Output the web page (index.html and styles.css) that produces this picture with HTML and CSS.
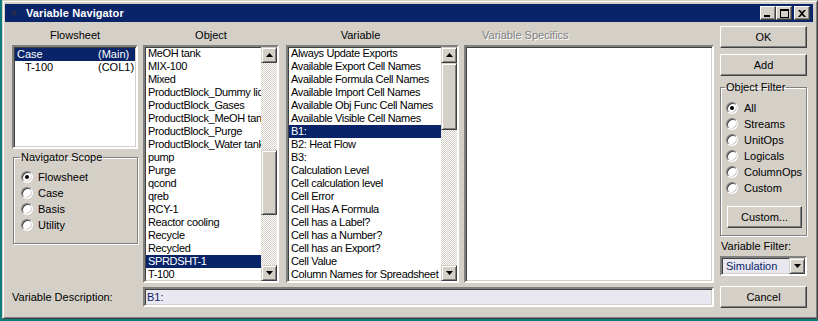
FILE: index.html
```html
<!DOCTYPE html>
<html>
<head>
<meta charset="utf-8">
<title>Variable Navigator</title>
<link rel="stylesheet" href="styles.css">
</head>
<body>
<div class="window">
  <div class="titlebar">
    <svg class="ticon" width="6" height="6" viewBox="0 0 6 6"><path d="M0 1 L1 0 L3 2 L5 0 L6 1 L4 3 L6 5 L5 6 L3 4 L1 6 L0 5 L2 3 Z" fill="#2c2c3c"/></svg>
    <span class="title">Variable Navigator</span>
    <div class="tbtns">
      <span class="tbtn"><svg width="8" height="7" viewBox="0 0 8 7"><rect x="0" y="5" width="6" height="2" fill="#000"/></svg></span>
      <span class="tbtn"><svg width="9" height="9" viewBox="0 0 9 9"><rect x="0.5" y="0.5" width="8" height="8" fill="none" stroke="#000"/><rect x="0" y="0" width="9" height="2" fill="#000"/></svg></span>
      <span class="tbtn close"><svg width="8" height="7" viewBox="0 0 8 7"><path d="M0 0 L2 0 L4 2 L6 0 L8 0 L5 3.5 L8 7 L6 7 L4 5 L2 7 L0 7 L3 3.5 Z" fill="#000"/></svg></span>
    </div>
  </div>
  <div class="content">
    <div class="main">
      <div class="cols">
        <div class="col c1">
          <div class="hdr">Flowsheet</div>
          <div class="list fs">
            <div class="row sel"><span class="n">Case</span><span class="t">(Main)</span></div>
            <div class="row"><span class="n ind">T-100</span><span class="t">(COL1)</span></div>
          </div>
          <fieldset class="group scope">
            <legend>Navigator Scope</legend>
            <label class="radio"><span class="rb on"></span>Flowsheet</label>
            <label class="radio"><span class="rb"></span>Case</label>
            <label class="radio"><span class="rb"></span>Basis</label>
            <label class="radio"><span class="rb"></span>Utility</label>
          </fieldset>
        </div>
        <div class="col c2">
          <div class="hdr">Object</div>
          <div class="list tall">
            <div class="items">
              <div class="row">MeOH tank</div>
              <div class="row">MIX-100</div>
              <div class="row">Mixed</div>
              <div class="row">ProductBlock_Dummy liq</div>
              <div class="row">ProductBlock_Gases</div>
              <div class="row">ProductBlock_MeOH tank</div>
              <div class="row">ProductBlock_Purge</div>
              <div class="row">ProductBlock_Water tank</div>
              <div class="row">pump</div>
              <div class="row">Purge</div>
              <div class="row">qcond</div>
              <div class="row">qreb</div>
              <div class="row">RCY-1</div>
              <div class="row">Reactor cooling</div>
              <div class="row">Recycle</div>
              <div class="row">Recycled</div>
              <div class="row sel">SPRDSHT-1</div>
              <div class="row">T-100</div>
            </div>
            <div class="sbar">
              <span class="sbtn"><svg width="7" height="4" viewBox="0 0 7 4"><path d="M3.5 0 L7 4 L0 4 Z" fill="#000"/></svg></span>
              <span class="track obj-top"></span>
              <span class="thumb obj-thumb"></span>
              <span class="track fill"></span>
              <span class="sbtn"><svg width="7" height="4" viewBox="0 0 7 4"><path d="M0 0 L7 0 L3.5 4 Z" fill="#000"/></svg></span>
            </div>
          </div>
        </div>
        <div class="col c3">
          <div class="hdr hdr-var">Variable</div>
          <div class="list tall">
            <div class="items">
              <div class="row">Always Update Exports</div>
              <div class="row">Available Export Cell Names</div>
              <div class="row">Available Formula Cell Names</div>
              <div class="row">Available Import Cell Names</div>
              <div class="row">Available Obj Func Cell Names</div>
              <div class="row">Available Visible Cell Names</div>
              <div class="row sel focus">B1:</div>
              <div class="row">B2: Heat Flow</div>
              <div class="row">B3:</div>
              <div class="row">Calculation Level</div>
              <div class="row">Cell calculation level</div>
              <div class="row">Cell Error</div>
              <div class="row">Cell Has A Formula</div>
              <div class="row">Cell has a Label?</div>
              <div class="row">Cell has a Number?</div>
              <div class="row">Cell has an Export?</div>
              <div class="row">Cell Value</div>
              <div class="row">Column Names for Spreadsheet</div>
            </div>
            <div class="sbar">
              <span class="sbtn"><svg width="7" height="4" viewBox="0 0 7 4"><path d="M3.5 0 L7 4 L0 4 Z" fill="#000"/></svg></span>
              <span class="thumb var-thumb"></span>
              <span class="track fill"></span>
              <span class="sbtn"><svg width="7" height="4" viewBox="0 0 7 4"><path d="M0 0 L7 0 L3.5 4 Z" fill="#000"/></svg></span>
            </div>
          </div>
        </div>
        <div class="col c4">
          <div class="hdr hdr-dis">Variable Specifics</div>
          <div class="list tall blank"></div>
        </div>
      </div>
      <div class="desc">
        <span class="desc-label">Variable Description:</span>
        <div class="desc-box">B1:</div>
      </div>
    </div>
    <div class="side">
      <div class="btn">OK</div>
      <div class="btn add">Add</div>
      <fieldset class="group filter">
        <legend>Object Filter</legend>
        <label class="radio"><span class="rb on"></span>All</label>
        <label class="radio"><span class="rb"></span>Streams</label>
        <label class="radio"><span class="rb"></span>UnitOps</label>
        <label class="radio"><span class="rb"></span>Logicals</label>
        <label class="radio"><span class="rb"></span>ColumnOps</label>
        <label class="radio"><span class="rb"></span>Custom</label>
        <div class="btn custom">Custom...</div>
      </fieldset>
      <div class="vf-label">Variable Filter:</div>
      <div class="combo">
        <span class="combo-text">Simulation</span>
        <span class="cbtn"><svg width="7" height="4" viewBox="0 0 7 4"><path d="M0 0 L7 0 L3.5 4 Z" fill="#000"/></svg></span>
      </div>
      <div class="btn cancel">Cancel</div>
    </div>
  </div>
</div>
</body>
</html>
```

FILE: styles.css
```css
* { box-sizing: border-box; }
html, body { margin: 0; padding: 0; }
body {
  background: #0f7d7d;
  width: 818px;
  height: 321px;
  overflow: hidden;
  font-family: "Liberation Sans", Arial, sans-serif;
  font-size: 11px;
  color: #000;
}
.window {
  margin-left: 2px;
  width: 816px;
  height: 319px;
  background: #d4d0c8;
  border: 1px solid;
  border-color: #d4d0c8 #404040 #404040 #d4d0c8;
  box-shadow: inset 1px 1px #fff, inset -1px -1px #808080;
  padding: 3px 4px 0 2px;
  display: flex;
  flex-direction: column;
}
.titlebar {
  height: 18px;
  background: #0a246a;
  color: #fff;
  display: flex;
  align-items: center;
  flex: none;
}
.ticon { margin-left: 6px; margin-right: 9px; }
.title { font-weight: bold; font-size: 11px; letter-spacing: 0.1px; }
.tbtns { margin-left: auto; display: flex; margin-right: 3px; }
.tbtn {
  width: 16px; height: 14px;
  background: #d4d0c8;
  border: 1px solid;
  border-color: #fff #404040 #404040 #fff;
  box-shadow: inset -1px -1px #808080;
  display: flex; align-items: center; justify-content: center;
}
.tbtn.close { margin-left: 2px; }

.content { display: flex; padding: 4px 0 0 7px; }
.main { display: flex; flex-direction: column; width: 702px; margin-top: 3px; }
.cols { display: flex; }
.col { display: flex; flex-direction: column; }
.c1 { width: 126px; }
.c2 { width: 136px; margin-left: 5px; }
.c3 { width: 173px; margin-left: 7px; }
.c4 { width: 250px; margin-left: 5px; }
.hdr { height: 13px; line-height: 13px; text-align: center; margin-bottom: 3px; }
.hdr-var { padding-right: 24px; }
.hdr-dis { text-align: left; padding-left: 18px; color: #808080; text-shadow: 1px 1px #fff; }

.list {
  background: #fff;
  border: 2px solid;
  border-color: #808080 #fff #fff #808080;
  box-shadow: inset 1px 1px #404040, inset -1px -1px #d4d0c8;
  display: flex;
}
.list.fs { height: 104px; flex-direction: column; padding: 1px 1px 0 1px; }
.list.tall { height: 238px; }
.items { flex: 1; padding: 0 0 0 1px; overflow: hidden; }
.row { height: 13px; line-height: 13px; padding-left: 2px; white-space: nowrap; overflow: hidden; }
.items .row { letter-spacing: -0.35px; }
.row.sel { background: #0a246a; color: #fff; }
.fs .row { display: flex; padding-left: 2px; }
.fs .n { width: 81px; }
.fs .n.ind { padding-left: 8px; }

.sbar { width: 16px; display: flex; flex-direction: column; }
.sbtn, .thumb, .cbtn {
  background: #d4d0c8;
  border: 1px solid;
  border-color: #d4d0c8 #404040 #404040 #d4d0c8;
  box-shadow: inset 1px 1px #fff, inset -1px -1px #808080;
}
.sbtn { height: 16px; flex: none; display: flex; align-items: center; justify-content: center; }
.track { background: repeating-conic-gradient(#fff 0 25%, #d4d0c8 0 50%) 0 0 / 2px 2px; }
.track.fill { flex: 1; }
.obj-top { height: 87px; }
.obj-thumb { height: 65px; flex: none; }
.var-thumb { height: 67px; flex: none; }

.group {
  margin: 0;
  border: 1px solid #808080;
  box-shadow: inset 1px 1px #fff, 1px 1px #fff;
}
.group legend { padding: 0 1px; line-height: 13px; }
.scope { margin: 2px 0 0 1px; width: 125px; padding: 5px 6px 10px 6px; }
.radio { display: flex; align-items: center; height: 16px; }
.rb {
  width: 12px; height: 12px;
  border-radius: 50%;
  background: #fff;
  border: 1px solid;
  border-color: #808080 #fff #fff #808080;
  box-shadow: inset 1px 1px #404040, inset -1px -1px #d4d0c8;
  margin: 0 6px 0 1px;
  display: flex; align-items: center; justify-content: center;
  flex: none;
}
.rb.on::after { content: ""; width: 4px; height: 4px; border-radius: 50%; background: #000; }
.scope .rb { margin-right: 5px; }

.desc { display: flex; align-items: center; margin-top: 4px; }
.desc-label { width: 131px; }
.desc-box {
  flex: 1; height: 20px;
  background: #e9e7f0;
  color: #0a246a;
  border: 2px solid;
  border-color: #808080 #fff #fff #808080;
  box-shadow: inset 1px 1px #404040, inset -1px -1px #d4d0c8;
  line-height: 16px;
  padding-left: 2px;
}

.side { width: 87px; margin-left: 6px; display: flex; flex-direction: column; }
.btn {
  height: 22px;
  background: #d4d0c8;
  border: 1px solid;
  border-color: #fff #404040 #404040 #fff;
  box-shadow: inset -1px -1px #808080;
  display: flex; align-items: center; justify-content: center;
}
.add { margin-top: 6px; }
.filter { margin-top: 5px; padding: 6px 4px 7px 4px; }
.custom { margin: 10px 0 0 2px; width: 75px; }
.vf-label { margin-top: 4px; line-height: 13px; padding-left: 1px; }
.combo {
  margin-top: 3px; height: 20px;
  background: #e9e7f0;
  border: 2px solid;
  border-color: #808080 #fff #fff #808080;
  box-shadow: inset 1px 1px #404040, inset -1px -1px #d4d0c8;
  display: flex; align-items: center;
}
.combo-text { flex: 1; color: #0a246a; padding-left: 4px; }
.cbtn { width: 16px; height: 16px; display: flex; align-items: center; justify-content: center; }
.cancel { margin-top: 10px; }
```
